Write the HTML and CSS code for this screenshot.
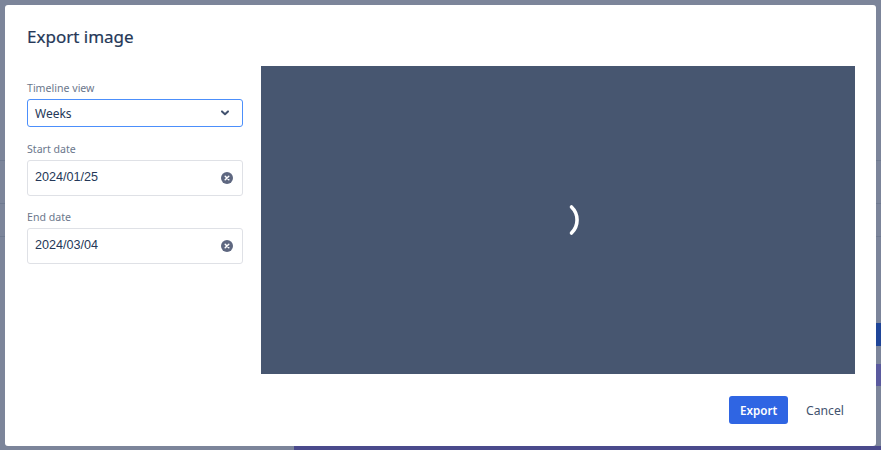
FILE: index.html
```html
<!DOCTYPE html>
<html lang="en">
<head>
<meta charset="UTF-8" />
<meta name="viewport" content="width=device-width, initial-scale=1" />
<title>Export image</title>
<link rel="stylesheet" href="styles.css">
</head>
<body>

<div class="modal">
  <h1 class="modal-title">Export image</h1>

  <div class="modal-body">
    <form class="options">
      <div class="field field-select">
        <label class="field-label">Timeline view</label>
        <div class="select">
          <span class="field-value">Weeks</span>
          <svg class="chevron" width="10" height="8" viewBox="0 0 10 8">
            <path d="M2 2.4 5 5.2 8 2.4" fill="none" stroke="#42526e" stroke-width="2" stroke-linecap="round" stroke-linejoin="round" />
          </svg>
        </div>
      </div>

      <div class="field">
        <label class="field-label">Start date</label>
        <div class="date-input">
          <span class="field-value">2024/01/25</span>
          <svg class="clear" width="12" height="12" viewBox="0 0 12 12">
            <circle cx="6" cy="6" r="6" fill="#5e6780" />
            <path d="M4.2 4.2 7.8 7.8M7.8 4.2 4.2 7.8" stroke="#fff" stroke-width="1.5" stroke-linecap="round" />
          </svg>
        </div>
      </div>

      <div class="field">
        <label class="field-label">End date</label>
        <div class="date-input">
          <span class="field-value">2024/03/04</span>
          <svg class="clear" width="12" height="12" viewBox="0 0 12 12">
            <circle cx="6" cy="6" r="6" fill="#5e6780" />
            <path d="M4.2 4.2 7.8 7.8M7.8 4.2 4.2 7.8" stroke="#fff" stroke-width="1.5" stroke-linecap="round" />
          </svg>
        </div>
      </div>
    </form>

    <div class="preview">
      <!-- spinner ring, only the right arc is showing -->
      <svg class="spinner" width="48" height="48" viewBox="0 0 48 48">
        <path d="M36.5 11A18 18 0 0 1 36.5 37" fill="none" stroke="#fff" stroke-width="3.6" stroke-linecap="round" />
      </svg>
    </div>
  </div>

  <div class="modal-footer">
    <button class="btn btn-primary" type="button">Export</button>
    <button class="btn btn-subtle" type="button">Cancel</button>
  </div>
</div>

</body>
</html>
```

FILE: styles.css
```css
html, body {
  margin: 0;
  height: 100%;
}
body {
  /* dimmed page behind the modal */
  background:
    linear-gradient(#6f7a90, #6f7a90) 0 160px / 100% 1px no-repeat,
    linear-gradient(#6f7a90, #6f7a90) 0 203px / 100% 1px no-repeat,
    linear-gradient(#6f7a90, #6f7a90) 0 236px / 100% 1px no-repeat,
    linear-gradient(#1f4598, #1f4598) 100% 323px / 5px 23px no-repeat,
    linear-gradient(#5a5a9e, #5a5a9e) 100% 364px / 5px 22px no-repeat,
    linear-gradient(#4a4a8c, #4a4a8c) 294px 446px / 100% 4px no-repeat,
    #7c859a;
  font-family: "Noto Sans", "Open Sans", sans-serif;
  color: #253858;
  padding: 5px;
  box-sizing: border-box;
  overflow: hidden;
}
.modal {
  background: #fff;
  width: 871px;
  height: 441px;
  border-radius: 3px;
  padding: 0 21px 0 22px;
  box-sizing: border-box;
  display: flex;
  flex-direction: column;
}
.modal-title {
  font-size: 17px;
  font-weight: 400;
  line-height: 24px;
  margin: 20px 0 17px;
  color: #253858;
  -webkit-text-stroke: 0.2px #253858;
}
.modal-body {
  display: flex;
  gap: 18px;
}
.options {
  width: 216px;
  flex-shrink: 0;
  padding-top: 14px;
}
.field {
  margin-bottom: 13px;
}
.field-select {
  margin-bottom: 14px;
}
.field-label {
  display: block;
  font-size: 10.6px;
  line-height: 16px;
  color: #6b778c;
  margin-bottom: 3px;
}
.field-value {
  font-size: 12px;
}
.select {
  height: 28px;
  border: 1px solid #4c8ffb;
  border-radius: 3px;
  padding: 0 12px 0 7px;
  display: flex;
  align-items: center;
  justify-content: space-between;
  box-sizing: border-box;
}
.date-input {
  height: 36px;
  border: 1px solid #dfe1e6;
  border-radius: 3px;
  padding: 0 9px 0 7px;
  display: flex;
  align-items: center;
  justify-content: space-between;
  box-sizing: border-box;
}
.date-input .field-value {
  font-family: "Liberation Sans", Arial, sans-serif;
  font-size: 12.6px;
  margin-bottom: 2px;
}
.preview {
  width: 594px;
  height: 308px;
  background: #475670;
  display: flex;
  align-items: center;
  justify-content: center;
}
.spinner {
  margin-left: 2px;
}
.modal-footer {
  display: flex;
  justify-content: flex-end;
  gap: 7px;
  margin-top: 22px;
}
.btn {
  height: 28px;
  border: none;
  border-radius: 3px;
  font-family: inherit;
  font-size: 12.2px;
  padding: 0 11px;
  cursor: pointer;
}
.btn-primary {
  background: #2f65e3;
  color: #fff;
  font-weight: 600;
  font-size: 11.6px;
  width: 59px;
}
.btn-subtle {
  background: none;
  color: #42526e;
}
```
